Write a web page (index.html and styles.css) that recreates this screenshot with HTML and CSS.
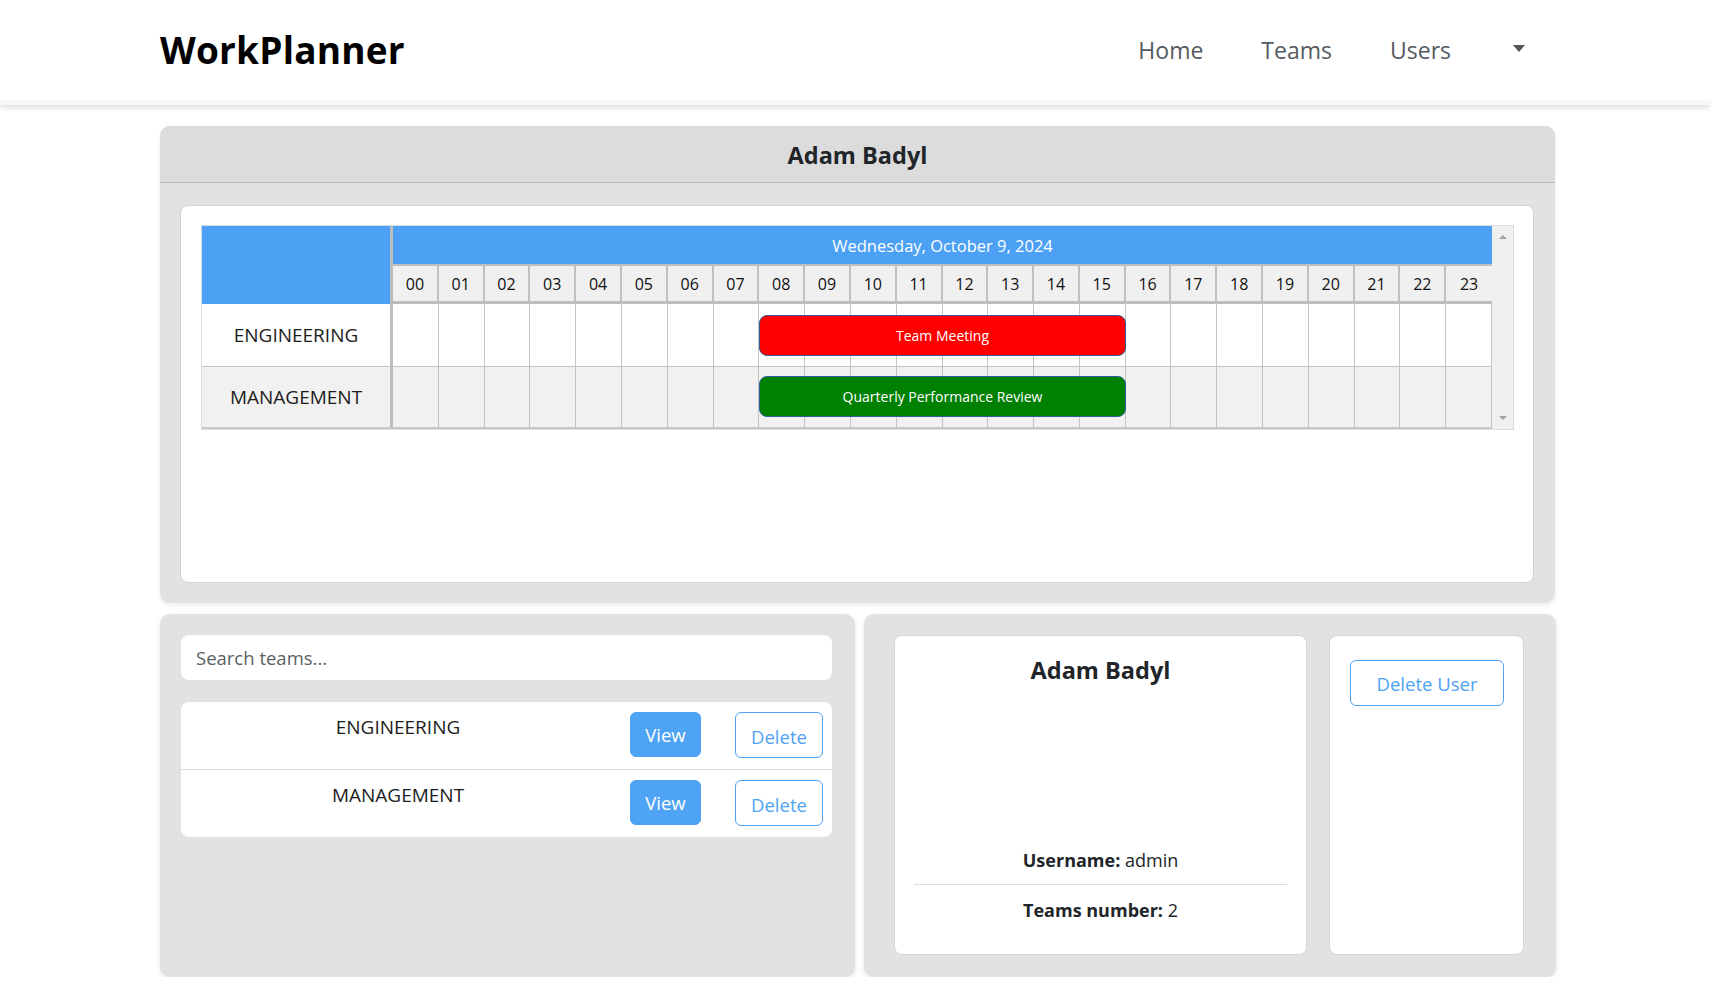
FILE: index.html
```html
<!DOCTYPE html>
<html lang="en">
<head>
<meta charset="utf-8">
<title>WorkPlanner</title>
<link rel="stylesheet" href="styles.css">
</head>
<body>
<header class="topbar">
  <div class="topbar-inner">
    <div class="brand">WorkPlanner</div>
    <nav class="nav">
      <a class="nav-link">Home</a>
      <a class="nav-link">Teams</a>
      <a class="nav-link">Users</a>
      <span class="caret"></span>
    </nav>
  </div>
</header>

<main class="main">
  <section class="panel-top">
    <div class="panel-head">Adam Badyl</div>
    <div class="panel-body">
      <div class="cal-card">
        <div class="cal-scroll">
          <div class="tl">
            <div class="tl-corner"></div>
            <div class="tl-date">Wednesday, October 9, 2024</div>
            <div class="tl-hour">00</div><div class="tl-hour">01</div><div class="tl-hour">02</div><div class="tl-hour">03</div>
            <div class="tl-hour">04</div><div class="tl-hour">05</div><div class="tl-hour">06</div><div class="tl-hour">07</div>
            <div class="tl-hour">08</div><div class="tl-hour">09</div><div class="tl-hour">10</div><div class="tl-hour">11</div>
            <div class="tl-hour">12</div><div class="tl-hour">13</div><div class="tl-hour">14</div><div class="tl-hour">15</div>
            <div class="tl-hour">16</div><div class="tl-hour">17</div><div class="tl-hour">18</div><div class="tl-hour">19</div>
            <div class="tl-hour">20</div><div class="tl-hour">21</div><div class="tl-hour">22</div><div class="tl-hour last">23</div>

            <div class="tl-label">ENGINEERING</div>
            <div class="tl-cell"></div><div class="tl-cell"></div><div class="tl-cell"></div><div class="tl-cell"></div>
            <div class="tl-cell"></div><div class="tl-cell"></div><div class="tl-cell"></div><div class="tl-cell"></div>
            <div class="tl-cell has-event"><div class="tl-event ev-red">Team Meeting</div></div><div class="tl-cell"></div><div class="tl-cell"></div><div class="tl-cell"></div>
            <div class="tl-cell"></div><div class="tl-cell"></div><div class="tl-cell"></div><div class="tl-cell"></div>
            <div class="tl-cell"></div><div class="tl-cell"></div><div class="tl-cell"></div><div class="tl-cell"></div>
            <div class="tl-cell"></div><div class="tl-cell"></div><div class="tl-cell"></div><div class="tl-cell"></div>

            <div class="tl-label alt">MANAGEMENT</div>
            <div class="tl-cell alt"></div><div class="tl-cell alt"></div><div class="tl-cell alt"></div><div class="tl-cell alt"></div>
            <div class="tl-cell alt"></div><div class="tl-cell alt"></div><div class="tl-cell alt"></div><div class="tl-cell alt"></div>
            <div class="tl-cell alt has-event"><div class="tl-event ev-green">Quarterly Performance Review</div></div><div class="tl-cell alt"></div><div class="tl-cell alt"></div><div class="tl-cell alt"></div>
            <div class="tl-cell alt"></div><div class="tl-cell alt"></div><div class="tl-cell alt"></div><div class="tl-cell alt"></div>
            <div class="tl-cell alt"></div><div class="tl-cell alt"></div><div class="tl-cell alt"></div><div class="tl-cell alt"></div>
            <div class="tl-cell alt"></div><div class="tl-cell alt"></div><div class="tl-cell alt"></div><div class="tl-cell alt"></div>
          </div>
          <div class="fake-scrollbar">
            <span class="arrow-up"></span>
            <span class="arrow-down"></span>
          </div>
        </div>
      </div>
    </div>
  </section>

  <div class="bottom">
    <section class="panel teams-panel">
      <input class="search" type="text" placeholder="Search teams...">
      <div class="team-list">
        <div class="team-row">
          <div class="team-name">ENGINEERING</div>
          <button class="btn btn-view">View</button>
          <button class="btn btn-outline">Delete</button>
        </div>
        <div class="team-row">
          <div class="team-name">MANAGEMENT</div>
          <button class="btn btn-view">View</button>
          <button class="btn btn-outline">Delete</button>
        </div>
      </div>
    </section>

    <section class="panel user-panel">
      <div class="user-card">
        <h2 class="user-name">Adam Badyl</h2>
        <div class="user-info">
          <div class="info-row"><b>Username:</b> admin</div>
          <div class="divider"></div>
          <div class="info-row"><b>Teams number:</b> 2</div>
        </div>
      </div>
      <div class="action-card">
        <button class="btn btn-outline btn-wide">Delete User</button>
      </div>
    </section>
  </div>
</main>
</body>
</html>
```

FILE: styles.css
```css
* { box-sizing: border-box; }

html, body {
  margin: 0;
  padding: 0;
  background: #ffffff;
}

body {
  font-family: "Open Sans", "Noto Sans", "Liberation Sans", sans-serif;
  color: #212529;
  font-size: 18px;
}

/* ---------- top bar ---------- */
.topbar {
  height: 105px;
  background: #ffffff;
  border-bottom: 5px solid #f7f8f9;
  box-shadow: 0 3px 5px rgba(0, 0, 0, 0.12);
}

.topbar-inner {
  margin-left: 160px;
  width: 1396px;
  height: 100px;
  display: flex;
  align-items: center;
  justify-content: space-between;
  padding-right: 31px;
}

.brand {
  font-size: 37px;
  font-weight: 700;
  color: #000;
  letter-spacing: 0.2px;
  margin-top: -2px;
}

.nav {
  display: flex;
  align-items: center;
  gap: 58px;
}

.nav-link {
  font-size: 23px;
  color: #555a60;
  text-decoration: none;
}

.caret {
  width: 0;
  height: 0;
  border-left: 6.5px solid transparent;
  border-right: 6.5px solid transparent;
  border-top: 7px solid #555;
  margin-top: -4px;
  margin-left: 4px;
}

/* ---------- main ---------- */
.main {
  margin: 21px 0 0 160px;
  width: 1396px;
}

.panel-top {
  width: 1395px;
  background: #e2e2e2;
  border-radius: 10px;
  box-shadow: 0 2px 5px rgba(0, 0, 0, 0.08);
}

.panel-head {
  height: 57px;
  background: #dcdcdc;
  border-bottom: 1px solid #b8b8b8;
  border-radius: 10px 10px 0 0;
  display: flex;
  align-items: center;
  justify-content: center;
  font-size: 23.5px;
  font-weight: 700;
  padding-top: 2px;
}

.panel-body {
  padding: 22px 21px 20px 20px;
}

.cal-card {
  background: #ffffff;
  border: 1px solid #d4d4d4;
  border-radius: 8px;
  height: 378px;
  padding: 19px 20px 20px 20px;
}

.cal-scroll {
  display: flex;
  border: 1px solid #dcdcdc;
  width: 1313px;
}

.tl {
  width: 1290px;
  flex: none;
  display: grid;
  grid-template-columns: 191px repeat(24, minmax(0, 1fr));
  grid-template-rows: 38px 40px 63px 62px;
}

.tl-corner {
  grid-column: 1;
  grid-row: 1 / 3;
  background: #4ca1f5;
  border-right: 3px solid #bcbcbc;
}

.tl-date {
  grid-column: 2 / 26;
  grid-row: 1;
  background: #4ca1f5;
  color: #ffffff;
  font-size: 16.5px;
  display: flex;
  align-items: center;
  justify-content: center;
}

.tl-hour {
  background: #f0f0f0;
  border-top: 2px solid #c0c0c0;
  border-right: 2px solid #c0c0c0;
  border-bottom: 3px solid #bdbdbd;
  font-size: 16px;
  color: #111;
  display: flex;
  align-items: center;
  justify-content: center;
}

.tl-hour.last { border-right: none; }

.tl-label {
  background: #ffffff;
  border-right: 3px solid #bcbcbc;
  border-bottom: 1px solid #c4c4c4;
  display: flex;
  align-items: center;
  justify-content: center;
  font-size: 19px;
  color: #1c1c1c;
}

.tl-cell {
  background: #ffffff;
  border-right: 1px solid #c4c4c4;
  border-bottom: 1px solid #c4c4c4;
}

.tl-label.alt,
.tl-cell.alt {
  background: #f1f1f1;
  border-bottom: 2px solid #c8c8c8;
}

.has-event {
  position: relative;
}

.tl-event {
  position: absolute;
  z-index: 1;
  left: 0;
  top: 11px;
  width: calc(800% + 8px);
  height: 41px;
  border: 1px solid #2f5f95;
  border-radius: 8px;
  color: #ffffff;
  font-size: 14px;
  display: flex;
  align-items: center;
  justify-content: center;
}

.ev-red { background: #ff0000; }
.ev-green { background: #008000; top: 9px; }

.fake-scrollbar {
  width: 21px;
  background: #f0f0f0;
  display: flex;
  flex-direction: column;
  align-items: center;
  justify-content: space-between;
  padding: 9px 0 9px 0;
}

.arrow-up,
.arrow-down {
  width: 0;
  height: 0;
  border-left: 4px solid transparent;
  border-right: 4px solid transparent;
}

.arrow-up { border-bottom: 4px solid #a3a3a3; }
.arrow-down { border-top: 4px solid #a3a3a3; }

/* ---------- bottom panels ---------- */
.bottom {
  display: flex;
  gap: 9px;
  margin-top: 11px;
}

.panel {
  height: 363px;
  background: #e2e2e2;
  border-radius: 10px;
  box-shadow: 0 2px 5px rgba(0, 0, 0, 0.1);
}

.teams-panel {
  width: 695px;
  padding: 21px 23px 0 21px;
}

.search {
  display: block;
  width: 651px;
  height: 45px;
  border: none;
  border-radius: 8px;
  background: #ffffff;
  padding: 0 15px;
  font-family: inherit;
  font-size: 18.5px;
  color: #212529;
  outline: none;
}

.search::placeholder { color: #5a5f64; }

.team-list {
  margin-top: 22px;
  width: 651px;
  background: #ffffff;
  border-radius: 8px;
}

.team-row {
  display: flex;
  align-items: flex-start;
  height: 67px;
}

.team-row + .team-row {
  border-top: 1px solid #dedede;
  height: 68px;
}

.team-name {
  width: 434px;
  text-align: center;
  font-size: 19px;
  line-height: 27px;
  padding-top: 12px;
  color: #1c1c1c;
}

.btn {
  font-family: inherit;
  font-size: 18.5px;
  border-radius: 6px;
  cursor: pointer;
  margin-top: 10px;
}

.btn-view {
  width: 71px;
  height: 45px;
  margin-left: 15px;
  background: #4ea3f5;
  border: 1px solid #4ea3f5;
  color: #ffffff;
  padding: 0;
}

.btn-outline {
  width: 88px;
  height: 46px;
  margin-left: 34px;
  background: #ffffff;
  border: 1px solid #4ea3f5;
  color: #4ea3f5;
  padding: 2px 0 0 0;
}

.user-panel {
  width: 692px;
  padding: 21px 32px 22px 30px;
  display: flex;
  gap: 22px;
}

.user-card {
  width: 413px;
  background: #ffffff;
  border: 1px solid #d6d6d6;
  border-radius: 8px;
  padding: 16px 19px 30px 19px;
  display: flex;
  flex-direction: column;
}

.user-name {
  margin: 0;
  font-size: 23.5px;
  line-height: 36px;
  font-weight: 700;
  text-align: center;
}

.user-info {
  margin-top: auto;
  text-align: center;
}

.info-row {
  font-size: 18px;
  line-height: 27px;
}

.info-row b { font-weight: 700; }

.divider {
  height: 1px;
  background: #dcdcdc;
  margin: 10px 0 12px 0;
}

.action-card {
  width: 195px;
  background: #ffffff;
  border: 1px solid #d6d6d6;
  border-radius: 8px;
  padding: 24px 20px;
}

.btn-wide {
  width: 154px;
  height: 46px;
  margin: 0;
  padding: 0;
}
```
